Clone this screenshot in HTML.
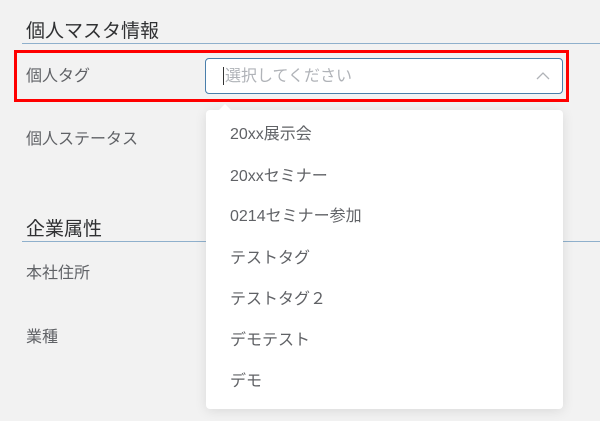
<!DOCTYPE html>
<html><head><meta charset="utf-8"><style>
body{margin:0;width:600px;height:421px;background:#f2f2f2;position:relative;overflow:hidden;font-family:"Liberation Sans","Noto Sans CJK JP",sans-serif;}
.a{position:absolute;white-space:nowrap;line-height:1}
.h{font-size:19px;color:#303133}
.l{font-size:16px;color:#606266}
.line{position:absolute;left:22px;right:0;height:1px;background:#8fb0cc}
.red{position:absolute;left:14px;top:50px;width:549px;height:46px;border:3px solid #f00}
.inp{position:absolute;left:205px;top:58px;width:356px;height:34px;border:1px solid #4a7fab;border-radius:4px;background:#fff}
.dd{position:absolute;left:206px;top:110px;width:357px;height:299px;background:#fff;border-radius:4px;box-shadow:0 2px 12px rgba(0,0,0,.1)}
.it{position:absolute;left:24px;font-size:16px;color:#606266;line-height:1}
</style></head><body>
<div class="a h" style="left:26px;top:22px">個人マスタ情報</div>
<div class="line" style="top:43px"></div>
<div class="red"></div>
<div class="a l" style="left:26px;top:69px">個人タグ</div>
<div class="inp">
<div class="a" style="left:17px;top:8px;width:1px;height:18px;background:#333"></div>
<div class="a" style="left:19px;top:10px;font-size:16px;color:#b0b3b8">選択してください</div>
<svg style="position:absolute;left:330px;top:12px" width="14" height="10"><path d="M1 8 L7 2 L13 8" fill="none" stroke="#b0b3b8" stroke-width="1.3"/></svg>
</div>
<div class="a l" style="left:26px;top:132px">個人ステータス</div>
<div class="a h" style="left:26px;top:220px">企業属性</div>
<div class="line" style="top:241px"></div>
<div class="a l" style="left:26px;top:266px">本社住所</div>
<div class="a l" style="left:26px;top:330px">業種</div>
<div class="dd">
<div style="position:absolute;left:13px;top:-6px;width:0;height:0;border-left:6px solid transparent;border-right:6px solid transparent;border-bottom:6px solid #fff"></div>
<div class="it" style="top:17px">20xx展示会</div>
<div class="it" style="top:59px">20xxセミナー</div>
<div class="it" style="top:99px">0214セミナー参加</div>
<div class="it" style="top:141px">テストタグ</div>
<div class="it" style="top:182px">テストタグ２</div>
<div class="it" style="top:223px">デモテスト</div>
<div class="it" style="top:264px">デモ</div>
</div>
</body></html>
